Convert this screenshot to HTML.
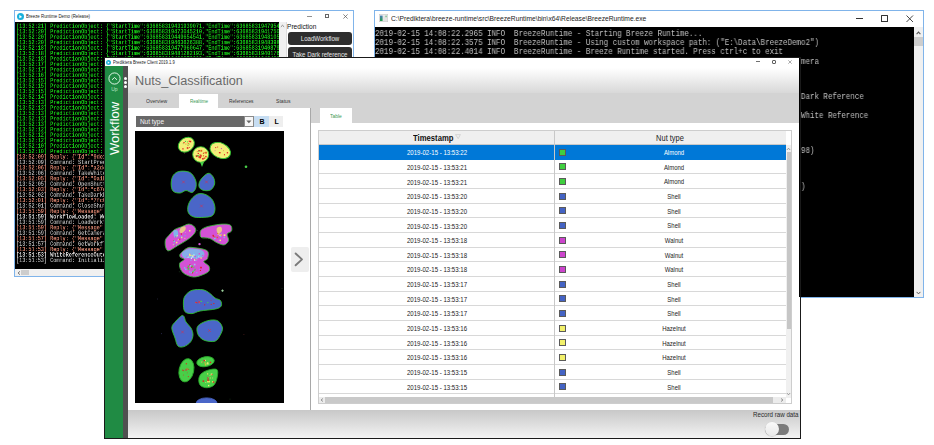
<!DOCTYPE html>
<html><head><meta charset="utf-8">
<style>
*{box-sizing:border-box;margin:0;padding:0}
html,body{width:934px;height:445px;overflow:hidden;background:#fff;font-family:"Liberation Sans",sans-serif}
body{position:relative}
.a{position:absolute}
.nw{white-space:nowrap}
/* ---------- left window ---------- */
#lw{position:absolute;left:14px;top:10px;width:340px;height:267px;border:1px solid #80b4ea;background:#fff}
#lw .title{left:10.8px;top:2.3px;font-size:5px;line-height:6px;color:#222;transform:scaleX(0.87);transform-origin:0 50%}
#lcon{left:0;top:11px;width:264px;height:247.3px;background:#000;overflow:hidden}
#lcon .txt{position:absolute;left:1px;top:2.2px;font-family:"Liberation Mono",monospace;font-size:12px;line-height:11px;white-space:pre;font-weight:bold;transform:scale(0.4306,0.495);transform-origin:0 0;will-change:transform}
.g{color:#16c016}.r{color:#c87a66}.c{color:#a4a4a4}.w{color:#d8d8d8}
#lvs{left:264px;top:11px;width:8px;height:247.3px;background:#f0f0f0}
#lhs{left:0;top:258.3px;width:264px;height:6.7px;background:#f0f0f0}
.btn{background:#2e2e2e;border-radius:3px;color:#f6f6f6;text-align:center;font-size:6.2px}
/* ---------- right window ---------- */
#rw{position:absolute;left:374px;top:10px;width:550px;height:288px;border:1px solid #80b4ea;background:#fff}
#rcon{left:0;top:16px;width:538.8px;height:270px;background:#000;overflow:hidden}
#rcon .txt{position:absolute;left:-0.5px;top:2.6px;font-family:"Liberation Mono",monospace;font-size:8px;line-height:8.845px;white-space:pre;color:#c0c0c0;transform:scale(0.934,1.0175);transform-origin:0 0;will-change:transform}
#rvs{left:538.8px;top:16px;width:9.2px;height:270px;background:#f0f0f0}
/* ---------- front window ---------- */
#fw{position:absolute;left:104px;top:57px;width:697px;height:382px;border:1px solid #1a1a1a;background:#fff;overflow:hidden}
#side{left:0;top:8px;width:18px;height:372px;background:#208b44}
#strip{left:18px;top:8px;width:5px;height:372px;background:#505050}
#hdr{left:23px;top:0;width:672px;height:35px;background:linear-gradient(#fff 0px,#fff 10px,#d8d8d8 35px)}
#tabbar{left:23px;top:35px;width:672px;height:15px;background:#d3d3d3}
.tab{font-size:5.5px;line-height:6px;color:#333;transform-origin:0 50%}
#lpane{left:23px;top:50px;width:182px;height:302.7px;background:#fff}
#rhead{left:206px;top:50px;width:489px;height:14.5px;background:#d3d3d3}
#rpane{left:206px;top:64.5px;width:489px;height:288.2px;background:#fff}
#vdiv{left:205px;top:50px;width:1px;height:302.7px;background:#a8a8a8}
#bbar{left:23px;top:351.7px;width:672px;height:28.3px;background:linear-gradient(#c8c8c8,#f3f3f3)}
/* table */
#tbl{left:213.3px;top:72.3px;width:474px;height:273.7px;border:1px solid #cdcdcd;background:#fff;overflow:hidden}
#thead{left:0;top:0;width:467px;height:13.4px;background:#efefef;border-bottom:1px solid #c8c8c8}
.row{position:absolute;left:0;width:467px;height:14.65px;border-bottom:1px solid #d8d8d8;font-size:7.5px;color:#1a1a1a}
.row.sel{background:#0078d7;color:#fff;border-bottom-color:#0078d7}
.row .ts{position:absolute;left:0;width:236px;text-align:center;top:4.1px;line-height:8px;transform:scaleX(0.81)}
.row .sq{position:absolute;left:239.3px;top:3.6px;width:7px;height:7px;border:0.6px solid #5a5a5a}
.row .nt{position:absolute;left:254.4px;width:200px;text-align:center;top:4px;line-height:8px;font-size:7px;transform:scaleX(0.85)}
#cdiv{left:235.1px;top:0;width:1px;height:266px;background:#c8c8c8}
#tvs{left:466.5px;top:13.4px;width:6.2px;height:253px;background:#f0f0f0}
#ths{left:0;top:265.5px;width:467px;height:6.7px;background:#ececec}
</style></head><body>

<!-- LEFT WINDOW -->
<div id="lw">
  <svg class="a" style="left:2.2px;top:1.5px" width="7" height="7" viewBox="0 0 6 6"><circle cx="3" cy="3" r="3" fill="#1ab0dc"/><path d="M2 1.6 L4.4 3.4 L2 4.4Z" fill="#fff"/></svg>
  <div class="a title nw">Breeze Runtime Demo (Release)</div>
  <div class="a" style="left:292.2px;top:4.7px;width:4.5px;height:0.7px;background:#909090"></div>
  <div class="a" style="left:309.8px;top:2.6px;width:4.5px;height:4.5px;border:0.7px solid #666"></div>
  <svg class="a" style="left:327.5px;top:2.6px" width="5" height="5" viewBox="0 0 5 5"><path d="M0.4 0.4L4.6 4.6M4.6 0.4L0.4 4.6" stroke="#555" stroke-width="0.7"/></svg>
  <div id="lcon" class="a"><div class="txt"><div class="g">[13:52:21] PredictionObject: {&quot;StartTime&quot;:636858319431939071,&quot;EndTime&quot;:636858319479542916,&quot;Id&quot;:&quot;9de3&quot;}</div><div class="g">[13:52:20] PredictionObject: {&quot;StartTime&quot;:636858319473045210,&quot;EndTime&quot;:636858319417505051,&quot;Id&quot;:&quot;9de3&quot;}</div><div class="g">[13:52:20] PredictionObject: {&quot;StartTime&quot;:636858319449654541,&quot;EndTime&quot;:636858319481056775,&quot;Id&quot;:&quot;9de3&quot;}</div><div class="g">[13:52:20] PredictionObject: {&quot;StartTime&quot;:636858319463626388,&quot;EndTime&quot;:636858319483982757,&quot;Id&quot;:&quot;9de3&quot;}</div><div class="g">[13:52:18] PredictionObject: {&quot;StartTime&quot;:636858319477960647,&quot;EndTime&quot;:636858319408795134,&quot;Id&quot;:&quot;9de3&quot;}</div><div class="g">[13:52:18] PredictionObject: {&quot;StartTime&quot;:636858319481282193,&quot;EndTime&quot;:636858319401767377,&quot;Id&quot;:&quot;9de3&quot;}</div><div class="g">[13:52:18] PredictionObject: {&quot;StartTime&quot;:636858319462979298,&quot;EndTime&quot;:636858319434809906,&quot;Id&quot;:&quot;9de3&quot;}</div><div class="g">[13:52:17] PredictionObject: {&quot;StartTime&quot;:636858319473925063,&quot;EndTime&quot;:636858319431451369,&quot;Id&quot;:&quot;9de3&quot;}</div><div class="g">[13:52:17] PredictionObject: {&quot;StartTime&quot;:636858319425735457,&quot;EndTime&quot;:636858319496253980,&quot;Id&quot;:&quot;9de3&quot;}</div><div class="g">[13:52:16] PredictionObject: {&quot;StartTime&quot;:636858319463117699,&quot;EndTime&quot;:636858319472608285,&quot;Id&quot;:&quot;9de3&quot;}</div><div class="g">[13:52:15] PredictionObject: {&quot;StartTime&quot;:636858319473770246,&quot;EndTime&quot;:636858319463935045,&quot;Id&quot;:&quot;9de3&quot;}</div><div class="g">[13:52:15] PredictionObject: {&quot;StartTime&quot;:636858319453302500,&quot;EndTime&quot;:636858319485774273,&quot;Id&quot;:&quot;9de3&quot;}</div><div class="g">[13:52:15] PredictionObject: {&quot;StartTime&quot;:636858319420215394,&quot;EndTime&quot;:636858319431128044,&quot;Id&quot;:&quot;9de3&quot;}</div><div class="g">[13:52:14] PredictionObject: {&quot;StartTime&quot;:636858319485209555,&quot;EndTime&quot;:636858319420350410,&quot;Id&quot;:&quot;9de3&quot;}</div><div class="g">[13:52:13] PredictionObject: {&quot;StartTime&quot;:636858319470220193,&quot;EndTime&quot;:636858319452336420,&quot;Id&quot;:&quot;9de3&quot;}</div><div class="g">[13:52:13] PredictionObject: {&quot;StartTime&quot;:636858319499489140,&quot;EndTime&quot;:636858319402032960,&quot;Id&quot;:&quot;9de3&quot;}</div><div class="g">[13:52:13] PredictionObject: {&quot;StartTime&quot;:636858319490115322,&quot;EndTime&quot;:636858319408594154,&quot;Id&quot;:&quot;9de3&quot;}</div><div class="g">[13:52:13] PredictionObject: {&quot;StartTime&quot;:636858319421394297,&quot;EndTime&quot;:636858319479336043,&quot;Id&quot;:&quot;9de3&quot;}</div><div class="g">[13:52:13] PredictionObject: {&quot;StartTime&quot;:636858319405743046,&quot;EndTime&quot;:636858319440435460,&quot;Id&quot;:&quot;9de3&quot;}</div><div class="g">[13:52:12] PredictionObject: {&quot;StartTime&quot;:636858319404162326,&quot;EndTime&quot;:636858319436162506,&quot;Id&quot;:&quot;9de3&quot;}</div><div class="g">[13:52:12] PredictionObject: {&quot;StartTime&quot;:636858319463451308,&quot;EndTime&quot;:636858319479825928,&quot;Id&quot;:&quot;9de3&quot;}</div><div class="g">[13:52:12] PredictionObject: {&quot;StartTime&quot;:636858319496478913,&quot;EndTime&quot;:636858319452023943,&quot;Id&quot;:&quot;9de3&quot;}</div><div class="g">[13:52:10] PredictionObject: {&quot;StartTime&quot;:636858319495848836,&quot;EndTime&quot;:636858319457302230,&quot;Id&quot;:&quot;9de3&quot;}</div><div class="g">[13:52:10] PredictionObject: {&quot;StartTime&quot;:636858319453011090,&quot;EndTime&quot;:636858319497727413,&quot;Id&quot;:&quot;9de3&quot;}</div><div class="r">[13:52:09] Reply: {&quot;Id&quot;:&quot;9de1c0a2&quot;,&quot;Success&quot;:true}</div><div class="c">[13:52:09] Command: StartPredict</div><div class="r">[13:52:06] Reply: {&quot;Id&quot;:&quot;a2d44f10&quot;,&quot;Success&quot;:true}</div><div class="c">[13:52:06] Command: TakeWhiteRef</div><div class="r">[13:52:05] Reply: {&quot;Id&quot;:&quot;0a1b9e77&quot;,&quot;Success&quot;:true}</div><div class="c">[13:52:05] Command: OpenShutter</div><div class="r">[13:52:03] Reply: {&quot;Id&quot;:&quot;c67d2a90&quot;,&quot;Success&quot;:true}</div><div class="c">[13:52:02] Command: TakeDarkRef</div><div class="r">[13:52:01] Reply: {&quot;Id&quot;:&quot;7fc0e3b1&quot;,&quot;Success&quot;:true}</div><div class="c">[13:52:01] Command: CloseShutter</div><div class="r">[13:51:59] Reply: {&quot;Message&quot;:&quot;OK&quot;}</div><div class="w">[13:51:59] WorkflowLoaded: Workflow</div><div class="c">[13:51:59] Command: LoadWorkflow</div><div class="r">[13:51:59] Reply: {&quot;Message&quot;:&quot;OK&quot;}</div><div class="c">[13:51:59] Command: GetCameras</div><div class="r">[13:51:57] Reply: {&quot;Message&quot;:&quot;OK&quot;}</div><div class="c">[13:51:57] Command: GetWorkflows</div><div class="r">[13:51:53] Reply: {&quot;Message&quot;:&quot;OK&quot;}</div><div class="w">[13:51:53] WhiteReferenceOutdated</div><div class="c">[13:51:53] Command: Initialize</div></div></div>
  <div id="lvs" class="a" style="border-right:0.6px solid #dcdcdc"><svg class="a" style="left:0.6px;top:2.2px" width="5" height="4" viewBox="0 0 5 4"><path d="M0.9 2.8L2.5 1.3L4.1 2.8" stroke="#707070" stroke-width="0.8" fill="none"/></svg></div>
  <div id="lhs" class="a"><svg class="a" style="left:1.5px;top:1.3px" width="4" height="4" viewBox="0 0 4 4"><path d="M3 0.3L1 2L3 3.7" stroke="#606060" stroke-width="0.8" fill="none"/></svg><div class="a" style="left:6.4px;top:0.5px;width:7.5px;height:5.7px;background:#cdcdcd"></div></div>
  <div class="a nw" style="left:272px;top:12px;font-size:6.6px;line-height:8px;color:#111">Prediction</div>
  <div class="a btn nw" style="left:273px;top:20.5px;width:64px;height:13.3px"></div><div class="a nw" style="left:273px;top:20.5px;width:64px;height:13.3px;line-height:13.3px;font-size:7px;color:#e8e8e8;text-align:center;transform:scaleX(0.87)">LoadWorkflow</div>
  <div class="a btn nw" style="left:273px;top:36.2px;width:64px;height:13.3px"></div><div class="a nw" style="left:263px;top:36.6px;width:84px;height:13.3px;line-height:13.3px;font-size:7px;color:#e8e8e8;text-align:center;transform:scaleX(0.87)">Take Dark reference</div>
</div>

<!-- RIGHT WINDOW -->
<div id="rw">
  <svg class="a" style="left:4px;top:3px" width="9" height="8" viewBox="0 0 9 8"><defs><linearGradient id="ig" x1="0" y1="0" x2="0" y2="1"><stop offset="0" stop-color="#4a7ab8"/><stop offset="1" stop-color="#22a04a"/></linearGradient></defs><rect x="0.3" y="0.3" width="8.4" height="7.4" fill="#eeeeee" stroke="#c8c8c8" stroke-width="0.6"/><rect x="1" y="1.6" width="2.6" height="5.4" fill="url(#ig)"/><rect x="4.2" y="1.6" width="3.8" height="5.4" fill="#e4e4e4"/><rect x="6.6" y="1.6" width="0.9" height="1.6" fill="#3ab060"/></svg>
  <div class="a nw" style="left:15.6px;top:3.5px;font-size:7.1px;line-height:9px;color:#222;transform:scaleX(0.944);transform-origin:0 50%">C:\Prediktera\breeze-runtime\src\BreezeRuntime\bin\x64\Release\BreezeRuntime.exe</div>
  <div class="a" style="left:481px;top:7px;width:7px;height:0.9px;background:#333"></div>
  <div class="a" style="left:506.4px;top:4.4px;width:6.2px;height:6.2px;border:0.9px solid #333;border-radius:0.5px"></div>
  <svg class="a" style="left:531px;top:3.8px" width="7.5" height="7.5" viewBox="0 0 7.5 7.5"><path d="M0.5 0.5L7 7M7 0.5L0.5 7" stroke="#333" stroke-width="0.9"/></svg>
  <div id="rcon" class="a"><div class="txt"><div>2019-02-15 14:08:22.2965 INFO  BreezeRuntime - Starting Breeze Runtime...</div><div>2019-02-15 14:08:22.3575 INFO  BreezeRuntime - Using custom workspace path: ("E:\Data\BreezeDemo2")</div><div>2019-02-15 14:08:22.4014 INFO  BreezeRuntime - Breeze Runtime started. Press ctrl+c to exit</div><div>2019-02-15 14:08:23.1122 INFO  BreezeRuntime.Camera - Initializing connection to spectral    camera</div><div>2019-02-15 14:08:24.0031 INFO  BreezeRuntime - Camera ready</div><div>2019-02-15 14:08:31.5531 INFO  BreezeRuntime - Workflow loaded</div><div>2019-02-15 14:08:32.0102 INFO  BreezeRuntime - Shutter closed</div><div>2019-02-15 14:08:33.6210 INFO  BreezeRuntime.Camera - Successfully captured reference frame:   Dark Reference</div><div>2019-02-15 14:08:35.1093 INFO  BreezeRuntime - Shutter opened</div><div>2019-02-15 14:08:36.8837 INFO  BreezeRuntime.Camera - Successfully captured reference frame:   White Reference</div><div>2019-02-15 14:08:38.2214 INFO  BreezeRuntime - Prediction started</div><div>2019-02-15 14:08:38.3312 INFO  BreezeRuntime - Streaming</div><div>2019-02-15 14:08:38.4410 INFO  BreezeRuntime - Objects</div><div>2019-02-15 14:08:39.0012 INFO  BreezeRuntime.Predict - Frame statistics (width: 640, objects:  98)</div><div>&nbsp;</div><div>&nbsp;</div><div>&nbsp;</div><div>2019-02-15 14:08:41.0012 INFO  BreezeRuntime.Predict - Frame statistics (frames: 12, rate:  0.0)</div></div></div>
  <div id="rvs" class="a">
    <svg class="a" style="left:2.2px;top:3.6px" width="5" height="4" viewBox="0 0 5 4"><path d="M0.6 3.1L2.5 1.1L4.4 3.1" stroke="#555" stroke-width="1.05" fill="none"/></svg>
    <div class="a" style="left:0.2px;top:10.2px;width:8.6px;height:8.8px;background:#cdcdcd"></div>
    <svg class="a" style="left:2px;top:263.5px" width="5" height="4" viewBox="0 0 5 4"><path d="M0.6 0.9L2.5 2.9L4.4 0.9" stroke="#555" stroke-width="1" fill="none"/></svg>
  </div>
</div>

<!-- FRONT WINDOW -->
<div id="fw">
  <div id="side" class="a">
    <svg class="a" style="left:3.2px;top:5.6px" width="14" height="14" viewBox="0 0 14 14"><circle cx="6.5" cy="6.5" r="5.6" fill="none" stroke="#f4fff6" stroke-width="0.9"/><path d="M4 7.8L6.5 5.5L9 7.8" fill="none" stroke="#f4fff6" stroke-width="0.9"/></svg>
    <div class="a nw" style="left:6.2px;top:20.8px;font-size:5px;line-height:5px;color:#bfe6c8">Up</div>
    <div class="a nw" style="left:-17px;top:56px;width:53px;height:13px;transform:rotate(-90deg);transform-origin:50% 50%;font-size:13px;line-height:13px;color:#fff;text-align:center">Workflow</div>
  </div>
  <div id="strip" class="a">
    <div class="a" style="left:1px;top:11px;width:3px;height:3px;border-radius:50%;background:#fff"></div>
    <div class="a" style="left:1px;top:14.8px;width:3px;height:3px;border-radius:50%;background:#fff"></div>
    <div class="a" style="left:1px;top:18.8px;width:3px;height:3px;border-radius:50%;background:#fff"></div>
  </div>
  <div id="hdr" class="a"></div>
  <div class="a nw" style="left:30.1px;top:14.7px;font-size:12.68px;line-height:16px;color:#6a6a6a">Nuts_Classification</div>
  <svg class="a" style="left:1.1px;top:1.6px" width="5" height="5" viewBox="0 0 6 6"><circle cx="3" cy="3" r="3" fill="#1ab0dc"/><path d="M2 1.6 L4.4 3.4 L2 4.4Z" fill="#fff"/></svg>
  <div class="a nw" style="left:7.8px;top:2.1px;font-size:4.8px;line-height:6px;color:#222;transform:scaleX(0.857);transform-origin:0 50%">Prediktera Breeze Client 2019.1.9</div>
  <div class="a" style="left:650.6px;top:3.2px;width:4.2px;height:0.6px;background:#707070"></div>
  <div class="a" style="left:666.6px;top:2px;width:4.2px;height:4px;border:0.7px solid #606060;border-radius:1px"></div>
  <svg class="a" style="left:683.4px;top:1.7px" width="4" height="4" viewBox="0 0 4 4"><path d="M0.3 0.3L3.7 3.7M3.7 0.3L0.3 3.7" stroke="#707070" stroke-width="0.6"/></svg>

  <div id="tabbar" class="a"></div>
  <div class="a" style="left:74.2px;top:36.1px;width:38.8px;height:14px;background:#fff"></div>
  <div class="a tab nw" style="left:41px;top:39.8px;transform:scaleX(0.925)">Overview</div>
  <div class="a tab nw" style="left:84.8px;top:39.8px;color:#3c9a55;transform:scaleX(0.83)">Realtime</div>
  <div class="a tab nw" style="left:123.6px;top:39.8px;transform:scaleX(0.87)">References</div>
  <div class="a tab nw" style="left:171px;top:39.8px;transform:scaleX(0.93)">Status</div>

  <div id="lpane" class="a"></div>
  <div id="rhead" class="a"></div>
  <div class="a" style="left:214.7px;top:49.6px;width:32.3px;height:15px;background:#fff"></div>
  <div class="a tab nw" style="left:225.2px;top:54.8px;color:#3c9a55;transform:scaleX(0.9)">Table</div>
  <div id="rpane" class="a"></div>
  <div id="vdiv" class="a"></div>

  <!-- dropdown -->
  <div class="a" style="left:30.8px;top:58px;width:107.9px;height:10.8px;background:#686868"></div>
  <div class="a nw" style="left:34.9px;top:59.7px;font-size:6.5px;line-height:8px;color:#f4f4f4">Nut type</div>
  <div class="a" style="left:138.7px;top:58px;width:9.9px;height:10.8px;background:#f6f6f6;border:0.7px solid #8a8a8a"></div>
  <svg class="a" style="left:141px;top:61.6px" width="6" height="4" viewBox="0 0 6 4"><path d="M0.3 0.4L5.5 0.4L2.9 3.2Z" fill="#666"/></svg>
  <div class="a" style="left:148.6px;top:58px;width:15.4px;height:10.8px;background:#c6ddf2"></div>
  <div class="a nw" style="left:154.6px;top:59.6px;font-size:7px;line-height:8px;font-weight:bold;color:#000">B</div>
  <div class="a" style="left:164px;top:58px;width:14.4px;height:10.8px;background:#eeeeee"></div>
  <div class="a nw" style="left:169.4px;top:59.6px;font-size:7px;line-height:8px;font-weight:bold;color:#000">L</div>

  <!-- image -->
  <div class="a" style="left:30px;top:73px;width:148.5px;height:272px;background:#000;overflow:hidden">
    <svg class="a" style="left:0;top:0" width="148" height="272" viewBox="0 0 148 272">
      <ellipse cx="51.3" cy="13.7" rx="8.6" ry="6.8" transform="rotate(-35 51.3 13.7)" fill="#f3ef78" stroke="#2fc02f" stroke-width="0.9"/>
<rect x="47.8" y="12.3" width="0.8" height="0.8" fill="#48cf48"/>
<rect x="54.2" y="16.2" width="0.8" height="0.8" fill="#e02020"/>
<rect x="48.4" y="11.0" width="1.2" height="1.2" fill="#e02020"/>
<rect x="47.3" y="17.2" width="1.3" height="1.3" fill="#e02020"/>
<rect x="49.9" y="9.9" width="1.1" height="1.1" fill="#48cf48"/>
<rect x="53.7" y="9.7" width="1.2" height="1.2" fill="#e02020"/>
<rect x="52.3" y="13.7" width="0.9" height="0.9" fill="#48cf48"/>
<rect x="52.8" y="14.2" width="0.8" height="0.8" fill="#f08030"/>
<rect x="53.7" y="12.7" width="0.9" height="0.9" fill="#48cf48"/>
<rect x="52.7" y="11.9" width="1.2" height="1.2" fill="#f08030"/>
<rect x="54.7" y="9.8" width="1.5" height="1.5" fill="#e02020"/>
<rect x="51.9" y="10.4" width="1.0" height="1.0" fill="#48cf48"/>
<rect x="50.4" y="12.6" width="1.0" height="1.0" fill="#f08030"/>
<rect x="51.8" y="16.2" width="1.6" height="1.6" fill="#e02020"/>
<ellipse cx="65.7" cy="23.5" rx="8" ry="7.8" transform="rotate(0 65.7 23.5)" fill="#f3ef78" stroke="#2fc02f" stroke-width="0.9"/>
<rect x="60.6" y="24.2" width="1.1" height="1.1" fill="#48cf48"/>
<rect x="63.9" y="23.5" width="0.9" height="0.9" fill="#e06020"/>
<rect x="68.5" y="21.2" width="1.1" height="1.1" fill="#e06020"/>
<rect x="64.3" y="25.5" width="1.8" height="1.8" fill="#e02020"/>
<rect x="64.0" y="24.8" width="0.8" height="0.8" fill="#e06020"/>
<rect x="62.7" y="22.2" width="0.9" height="0.9" fill="#e06020"/>
<rect x="65.1" y="24.1" width="1.6" height="1.6" fill="#e02020"/>
<rect x="70.1" y="20.8" width="1.8" height="1.8" fill="#e06020"/>
<rect x="67.9" y="22.1" width="0.9" height="0.9" fill="#e02020"/>
<rect x="61.8" y="20.3" width="0.8" height="0.8" fill="#e02020"/>
<rect x="63.1" y="19.2" width="1.4" height="1.4" fill="#48cf48"/>
<rect x="63.5" y="19.0" width="1.3" height="1.3" fill="#e02020"/>
<rect x="67.9" y="24.2" width="1.2" height="1.2" fill="#e06020"/>
<rect x="60.9" y="25.1" width="1.0" height="1.0" fill="#e02020"/>
<rect x="61.0" y="24.7" width="0.8" height="0.8" fill="#e02020"/>
<rect x="70.2" y="24.9" width="1.4" height="1.4" fill="#e02020"/>
<rect x="65.4" y="18.9" width="1.8" height="1.8" fill="#e06020"/>
<rect x="65.3" y="23.3" width="0.9" height="0.9" fill="#e02020"/>
<rect x="68.7" y="26.4" width="1.6" height="1.6" fill="#e06020"/>
<rect x="61.5" y="24.0" width="1.6" height="1.6" fill="#e02020"/>
<rect x="63.3" y="25.2" width="1.5" height="1.5" fill="#e02020"/>
<rect x="62.8" y="21.9" width="1.1" height="1.1" fill="#e02020"/>
<rect x="62.4" y="24.0" width="1.4" height="1.4" fill="#48cf48"/>
<rect x="67.1" y="27.0" width="1.6" height="1.6" fill="#e02020"/>
<path d="M65.0 31.0L67.0 36.0L69.0 31.0Z" fill="#48cf48"/>
<ellipse cx="85.3" cy="19.5" rx="10.8" ry="7.4" transform="rotate(25 85.3 19.5)" fill="#f3ef78" stroke="#2fc02f" stroke-width="0.9"/>
<rect x="89.1" y="23.4" width="0.8" height="0.8" fill="#e02020"/>
<rect x="84.4" y="21.1" width="1.2" height="1.2" fill="#e02020"/>
<rect x="85.9" y="17.1" width="1.0" height="1.0" fill="#c040c0"/>
<rect x="82.2" y="15.6" width="0.9" height="0.9" fill="#e02020"/>
<rect x="91.8" y="21.1" width="1.3" height="1.3" fill="#e02020"/>
<rect x="80.2" y="16.1" width="1.0" height="1.0" fill="#e02020"/>
<rect x="79.7" y="19.4" width="0.7" height="0.7" fill="#c040c0"/>
<rect x="83.9" y="21.0" width="1.2" height="1.2" fill="#e02020"/>
<rect x="88.1" y="19.5" width="0.6" height="0.6" fill="#e02020"/>
<rect x="88.9" y="23.2" width="1.0" height="1.0" fill="#e02020"/>
<circle cx="111.0" cy="35.8" r="1.3" fill="#48cf48"/>
<path d="M45.0 40.3C47.8 39.9 52.4 40.1 55.0 41.5C57.6 42.9 59.5 46.4 60.5 49.0C61.5 51.6 61.4 54.9 60.8 57.0C60.2 59.1 58.6 61.1 57.0 61.5C55.4 61.9 53.0 59.4 51.0 59.5C49.0 59.6 47.2 61.9 45.0 62.0C42.8 62.1 39.5 61.7 38.0 60.0C36.5 58.3 36.1 54.7 36.2 52.0C36.3 49.3 37.0 45.9 38.5 44.0C40.0 42.1 42.2 40.7 45.0 40.3Z" fill="#4a66c8" stroke="#2fc02f" stroke-width="0.9"/>
<path d="M73.0 42.3C75.1 41.8 77.1 44.2 78.2 46.0C79.3 47.8 80.0 50.8 79.6 53.0C79.1 55.2 77.4 58.0 75.5 59.0C73.6 60.0 69.9 59.8 68.0 59.2C66.1 58.6 64.4 57.2 64.0 55.5C63.6 53.8 64.0 51.2 65.5 49.0C67.0 46.8 70.9 42.8 73.0 42.3Z" fill="#4a66c8" stroke="#2fc02f" stroke-width="0.9"/>
<path d="M63.0 62.9C65.4 62.2 68.6 62.7 71.0 63.7C73.4 64.7 76.0 66.7 77.5 69.0C79.0 71.3 80.0 74.9 80.0 77.5C80.0 80.1 79.3 83.0 77.5 84.5C75.7 86.0 72.1 86.1 69.0 86.3C65.9 86.6 61.6 86.7 59.0 86.0C56.4 85.3 54.5 83.8 53.5 82.0C52.5 80.2 52.5 77.3 53.0 75.0C53.5 72.7 54.8 70.0 56.5 68.0C58.2 66.0 60.6 63.6 63.0 62.9Z" fill="#4a66c8" stroke="#2fc02f" stroke-width="0.9"/>
<path d="M47.1 49.6L49.9 52.4M49.9 49.6L47.1 52.4" stroke="#d03050" stroke-width="0.6"/>
<path d="M70.1 49.6L72.9 52.4M72.9 49.6L70.1 52.4" stroke="#d03050" stroke-width="0.6"/>
<path d="M65.1 73.6L67.9 76.4M67.9 73.6L65.1 76.4" stroke="#d03050" stroke-width="0.6"/>
<path d="M30.8 108.1C31.4 106.9 32.3 106.0 33.8 104.4C35.3 102.8 37.4 100.0 39.6 98.6C41.8 97.1 44.6 96.6 46.9 95.7C49.2 94.8 51.6 93.2 53.5 93.1C55.4 93.0 57.4 94.0 58.6 95.0C59.8 96.0 60.9 97.7 60.8 99.3C60.7 100.9 59.4 102.7 57.8 104.4C56.2 106.1 53.9 107.8 51.3 109.5C48.8 111.2 45.4 113.0 42.5 114.7C39.6 116.4 35.8 119.5 33.8 119.8C31.9 120.2 31.4 118.2 30.8 116.8C30.2 115.5 30.1 113.1 30.1 111.7C30.1 110.2 30.2 109.3 30.8 108.1Z" fill="#d452d6" stroke="#3ab43a" stroke-width="0.9"/>
<path d="M46.0 96.5C46.9 95.6 49.2 95.2 50.0 95.5C50.8 95.8 51.0 97.4 50.5 98.5C50.0 99.6 48.0 101.6 47.0 102.0C46.0 102.4 44.7 101.9 44.5 101.0C44.3 100.1 45.1 97.4 46.0 96.5Z" fill="#f0ec70" opacity="0.75"/>
<path d="M38.5 100.0C39.0 98.8 41.8 98.7 42.5 99.5C43.2 100.3 43.5 103.8 43.0 105.0C42.5 106.2 40.2 107.3 39.5 106.5C38.8 105.7 38.0 101.2 38.5 100.0Z" fill="#72c6ee" opacity="0.85"/>
<rect x="54.0" y="99.0" width="1.5" height="1.5" fill="#f3ef78"/>
<rect x="38.1" y="109.2" width="1.2" height="1.2" fill="#e02020"/>
<rect x="49.8" y="100.9" width="1.1" height="1.1" fill="#e070e0"/>
<rect x="42.2" y="108.5" width="1.5" height="1.5" fill="#e070e0"/>
<rect x="47.9" y="108.8" width="0.8" height="0.8" fill="#e070e0"/>
<rect x="38.4" y="112.2" width="1.5" height="1.5" fill="#9090e0"/>
<rect x="49.4" y="106.9" width="0.9" height="0.9" fill="#f3ef78"/>
<rect x="46.3" y="108.7" width="0.8" height="0.8" fill="#e070e0"/>
<rect x="49.4" y="103.8" width="1.5" height="1.5" fill="#9090e0"/>
<rect x="37.8" y="113.3" width="0.9" height="0.9" fill="#f3ef78"/>
<rect x="45.8" y="102.4" width="1.2" height="1.2" fill="#e02020"/>
<rect x="46.0" y="105.8" width="1.4" height="1.4" fill="#f3ef78"/>
<rect x="40.9" y="110.8" width="1.5" height="1.5" fill="#f3ef78"/>
<rect x="41.7" y="104.1" width="1.1" height="1.1" fill="#f3ef78"/>
<rect x="38.4" y="109.5" width="1.6" height="1.6" fill="#72c6ee"/>
<rect x="39.8" y="113.7" width="0.9" height="0.9" fill="#e02020"/>
<rect x="43.3" y="108.0" width="0.9" height="0.9" fill="#f3ef78"/>
<rect x="44.2" y="107.7" width="1.1" height="1.1" fill="#e02020"/>
<rect x="40.1" y="105.6" width="0.7" height="0.7" fill="#e02020"/>
<rect x="46.2" y="105.2" width="1.1" height="1.1" fill="#72c6ee"/>
<rect x="44.6" y="104.6" width="0.8" height="0.8" fill="#72c6ee"/>
<rect x="40.6" y="113.6" width="1.5" height="1.5" fill="#9090e0"/>
<path d="M65.9 99.3C66.8 98.2 68.1 97.3 70.3 96.4C72.5 95.5 75.9 94.7 79.0 94.2C82.1 93.6 86.4 93.0 89.2 93.1C92.0 93.1 94.6 93.3 95.8 94.5C97.0 95.7 97.1 98.7 96.5 100.1C95.9 101.5 92.7 101.4 92.2 103.0C91.7 104.6 94.1 107.7 93.6 109.5C93.1 111.3 91.1 113.5 89.2 113.9C87.2 114.3 84.3 112.8 81.9 111.7C79.5 110.6 77.1 108.2 74.6 107.4C72.0 106.6 68.2 107.3 66.6 106.6C65.0 105.9 65.2 104.2 65.1 103.0C65.0 101.8 65.0 100.4 65.9 99.3Z" fill="#d452d6" stroke="#3ab43a" stroke-width="0.9"/>
<path d="M82.0 97.0C82.7 96.2 85.2 95.6 86.0 96.0C86.8 96.4 87.2 98.4 87.0 99.5C86.8 100.6 85.3 102.2 84.5 102.5C83.7 102.8 82.4 101.9 82.0 101.0C81.6 100.1 81.3 97.8 82.0 97.0Z" fill="#f0ec70" opacity="0.75"/>
<rect x="81.6" y="105.7" width="1.5" height="1.5" fill="#e05050"/>
<rect x="85.8" y="103.6" width="1.1" height="1.1" fill="#e02020"/>
<rect x="79.5" y="106.9" width="0.8" height="0.8" fill="#72c6ee"/>
<rect x="88.6" y="103.3" width="1.8" height="1.8" fill="#f3ef78"/>
<rect x="82.6" y="109.3" width="0.8" height="0.8" fill="#72c6ee"/>
<rect x="85.1" y="104.9" width="1.1" height="1.1" fill="#72c6ee"/>
<rect x="82.3" y="101.8" width="1.6" height="1.6" fill="#f3ef78"/>
<rect x="78.9" y="105.3" width="1.5" height="1.5" fill="#e05050"/>
<rect x="84.5" y="108.6" width="1.5" height="1.5" fill="#f3ef78"/>
<rect x="88.6" y="105.9" width="1.2" height="1.2" fill="#72c6ee"/>
<rect x="86.3" y="101.8" width="0.8" height="0.8" fill="#72c6ee"/>
<rect x="85.3" y="103.3" width="1.4" height="1.4" fill="#f3ef78"/>
<rect x="77.6" y="103.8" width="1.1" height="1.1" fill="#e02020"/>
<rect x="83.2" y="102.3" width="1.0" height="1.0" fill="#f3ef78"/>
<rect x="77.7" y="104.4" width="1.3" height="1.3" fill="#e02020"/>
<rect x="82.4" y="102.1" width="0.9" height="0.9" fill="#e02020"/>
<rect x="84.1" y="103.7" width="1.1" height="1.1" fill="#f3ef78"/>
<rect x="79.0" y="106.7" width="1.5" height="1.5" fill="#72c6ee"/>
<path d="M45.4 122.7C46.6 121.1 50.3 117.8 52.7 116.8C55.1 115.8 57.3 116.6 60.0 116.8C62.7 117.1 66.6 117.6 68.8 118.3C71.0 119.0 72.6 119.6 73.2 121.2C73.8 122.8 73.1 126.2 72.4 127.8C71.7 129.4 68.6 129.5 68.8 130.7C69.1 131.9 73.1 133.5 73.9 135.1C74.8 136.7 75.0 138.7 73.9 140.2C72.8 141.7 69.9 142.9 67.3 143.9C64.8 144.9 61.5 146.1 58.6 146.0C55.7 145.9 52.0 144.4 49.8 143.1C47.6 141.8 46.3 139.8 45.4 138.0C44.6 136.2 44.1 133.8 44.7 132.2C45.3 130.6 49.0 129.5 49.1 128.5C49.2 127.5 46.0 127.3 45.4 126.3C44.8 125.3 44.2 124.3 45.4 122.7Z" fill="#d452d6" stroke="#3ab43a" stroke-width="0.9"/>
<path d="M47.0 122.0C47.7 120.5 50.7 118.7 53.0 118.0C55.3 117.3 58.5 117.7 61.0 118.0C63.5 118.3 66.7 118.8 68.0 120.0C69.3 121.2 70.0 123.7 69.0 125.0C68.0 126.3 64.3 127.7 62.0 128.0C59.7 128.3 57.2 127.2 55.0 127.0C52.8 126.8 50.3 127.8 49.0 127.0C47.7 126.2 46.3 123.5 47.0 122.0Z" fill="#72c6ee" opacity="0.8"/>
<rect x="63.3" y="128.8" width="1.7" height="1.7" fill="#d452d6"/>
<rect x="63.4" y="124.9" width="1.7" height="1.7" fill="#e0e0ff"/>
<rect x="61.5" y="127.3" width="1.0" height="1.0" fill="#f3ef78"/>
<rect x="59.5" y="125.0" width="1.8" height="1.8" fill="#72c6ee"/>
<rect x="60.7" y="128.9" width="0.9" height="0.9" fill="#72c6ee"/>
<rect x="53.9" y="122.6" width="1.7" height="1.7" fill="#d452d6"/>
<rect x="64.0" y="125.0" width="0.9" height="0.9" fill="#f3ef78"/>
<rect x="59.5" y="127.5" width="1.1" height="1.1" fill="#d452d6"/>
<rect x="63.6" y="122.1" width="1.4" height="1.4" fill="#d452d6"/>
<rect x="56.7" y="124.8" width="1.7" height="1.7" fill="#e0e0ff"/>
<rect x="61.3" y="126.4" width="1.5" height="1.5" fill="#72c6ee"/>
<rect x="55.6" y="126.5" width="1.5" height="1.5" fill="#e0e0ff"/>
<rect x="51.7" y="124.8" width="1.1" height="1.1" fill="#d452d6"/>
<rect x="62.4" y="126.9" width="1.2" height="1.2" fill="#d452d6"/>
<rect x="59.3" y="124.6" width="1.7" height="1.7" fill="#d452d6"/>
<rect x="58.5" y="122.9" width="1.8" height="1.8" fill="#72c6ee"/>
<rect x="54.4" y="122.1" width="0.9" height="0.9" fill="#72c6ee"/>
<rect x="54.2" y="123.6" width="1.8" height="1.8" fill="#f3ef78"/>
<rect x="59.2" y="128.9" width="1.1" height="1.1" fill="#e0e0ff"/>
<rect x="67.0" y="124.9" width="1.0" height="1.0" fill="#72c6ee"/>
<rect x="57.1" y="127.3" width="1.2" height="1.2" fill="#d452d6"/>
<rect x="55.3" y="128.4" width="1.2" height="1.2" fill="#72c6ee"/>
<rect x="55.8" y="124.0" width="1.6" height="1.6" fill="#72c6ee"/>
<rect x="56.4" y="123.9" width="0.9" height="0.9" fill="#f3ef78"/>
<rect x="66.1" y="122.8" width="1.8" height="1.8" fill="#72c6ee"/>
<rect x="54.0" y="122.7" width="1.2" height="1.2" fill="#f3ef78"/>
<rect x="64.5" y="127.9" width="1.8" height="1.8" fill="#d452d6"/>
<rect x="65.2" y="126.3" width="1.5" height="1.5" fill="#f3ef78"/>
<rect x="63.6" y="124.5" width="1.6" height="1.6" fill="#72c6ee"/>
<rect x="58.4" y="123.4" width="1.1" height="1.1" fill="#e0e0ff"/>
<rect x="63.8" y="126.5" width="1.6" height="1.6" fill="#d452d6"/>
<rect x="55.0" y="125.6" width="1.0" height="1.0" fill="#d452d6"/>
<rect x="59.0" y="128.1" width="1.1" height="1.1" fill="#f3ef78"/>
<rect x="58.0" y="121.4" width="1.1" height="1.1" fill="#72c6ee"/>
<rect x="52.5" y="125.6" width="1.1" height="1.1" fill="#e0e0ff"/>
<rect x="54.2" y="125.7" width="1.7" height="1.7" fill="#72c6ee"/>
<rect x="57.3" y="124.1" width="1.1" height="1.1" fill="#f3ef78"/>
<rect x="54.4" y="127.5" width="1.2" height="1.2" fill="#d452d6"/>
<rect x="59.1" y="126.3" width="0.9" height="0.9" fill="#72c6ee"/>
<rect x="66.9" y="123.8" width="1.3" height="1.3" fill="#d452d6"/>
<rect x="54.5" y="140.1" width="0.9" height="0.9" fill="#72c6ee"/>
<rect x="57.2" y="139.6" width="1.8" height="1.8" fill="#48cf48"/>
<rect x="58.8" y="132.7" width="1.7" height="1.7" fill="#b0b0f0"/>
<rect x="59.5" y="138.8" width="0.9" height="0.9" fill="#48cf48"/>
<rect x="50.0" y="137.7" width="1.5" height="1.5" fill="#72c6ee"/>
<rect x="54.3" y="133.3" width="1.3" height="1.3" fill="#e02020"/>
<rect x="57.5" y="139.6" width="0.9" height="0.9" fill="#72c6ee"/>
<rect x="59.6" y="137.8" width="1.1" height="1.1" fill="#48cf48"/>
<rect x="53.7" y="135.2" width="1.3" height="1.3" fill="#d452d6"/>
<rect x="52.6" y="134.5" width="1.5" height="1.5" fill="#48cf48"/>
<rect x="59.0" y="138.7" width="0.9" height="0.9" fill="#48cf48"/>
<rect x="52.5" y="136.2" width="1.0" height="1.0" fill="#e02020"/>
<rect x="57.1" y="138.8" width="0.8" height="0.8" fill="#d452d6"/>
<rect x="54.0" y="140.5" width="1.0" height="1.0" fill="#72c6ee"/>
<rect x="66.7" y="134.3" width="1.1" height="1.1" fill="#d452d6"/>
<rect x="62.0" y="138.1" width="1.3" height="1.3" fill="#d452d6"/>
<rect x="61.3" y="141.2" width="1.0" height="1.0" fill="#72c6ee"/>
<rect x="56.4" y="141.0" width="1.5" height="1.5" fill="#e02020"/>
<rect x="54.9" y="133.9" width="1.6" height="1.6" fill="#b0b0f0"/>
<rect x="56.1" y="135.7" width="1.2" height="1.2" fill="#e02020"/>
<rect x="48.9" y="136.2" width="1.4" height="1.4" fill="#72c6ee"/>
<rect x="65.2" y="135.8" width="1.6" height="1.6" fill="#e02020"/>
<rect x="58.4" y="135.7" width="1.0" height="1.0" fill="#48cf48"/>
<rect x="55.7" y="141.0" width="1.4" height="1.4" fill="#72c6ee"/>
<rect x="53.0" y="138.3" width="0.8" height="0.8" fill="#48cf48"/>
<rect x="55.1" y="134.7" width="0.8" height="0.8" fill="#b0b0f0"/>
<rect x="64.9" y="138.9" width="1.1" height="1.1" fill="#e02020"/>
<rect x="64.3" y="138.0" width="0.8" height="0.8" fill="#72c6ee"/>
<rect x="52.6" y="136.8" width="1.8" height="1.8" fill="#48cf48"/>
<rect x="56.3" y="134.5" width="1.6" height="1.6" fill="#48cf48"/>
<circle cx="64.5" cy="113.1" r="1.2" fill="#d452d6"/>
<path d="M50.0 165.0C51.4 162.9 54.0 160.3 57.0 159.3C60.0 158.3 65.0 158.3 68.0 158.8C71.0 159.3 73.0 161.1 75.0 162.5C77.0 163.9 78.2 165.8 80.0 167.0C81.8 168.2 84.5 168.2 85.5 169.5C86.5 170.8 87.0 173.6 86.2 175.0C85.4 176.4 84.0 177.2 80.5 178.0C77.0 178.8 68.9 179.2 65.0 180.0C61.1 180.8 59.5 182.5 57.0 182.6C54.5 182.7 51.2 182.3 49.8 180.5C48.4 178.7 48.4 174.6 48.4 172.0C48.4 169.4 48.6 167.1 50.0 165.0Z" fill="#4a66c8" stroke="#2fc02f" stroke-width="0.9"/>
<rect x="61.2" y="171.0" width="1.1" height="1.1" fill="#e02020"/>
<rect x="75.7" y="172.9" width="1.0" height="1.0" fill="#e02020"/>
<rect x="65.9" y="169.9" width="1.1" height="1.1" fill="#48cf48"/>
<rect x="72.3" y="171.1" width="1.1" height="1.1" fill="#48cf48"/>
<rect x="60.3" y="171.0" width="1.2" height="1.2" fill="#e06060"/>
<rect x="69.1" y="173.3" width="1.1" height="1.1" fill="#e02020"/>
<rect x="78.3" y="172.0" width="1.1" height="1.1" fill="#e02020"/>
<rect x="65.1" y="169.7" width="0.8" height="0.8" fill="#48cf48"/>
<rect x="75.7" y="169.2" width="0.7" height="0.7" fill="#e02020"/>
<rect x="63.7" y="169.7" width="0.7" height="0.7" fill="#e06060"/>
<rect x="63.9" y="171.2" width="1.1" height="1.1" fill="#e06060"/>
<rect x="60.5" y="170.8" width="1.1" height="1.1" fill="#e02020"/>
<rect x="86.5" y="158.7" width="2" height="2" fill="#9acf9a" transform="rotate(45 87.5 159.7)"/>
<path d="M46.5 184.8C47.8 184.1 48.2 184.5 49.0 185.5C49.8 186.5 49.8 189.1 51.0 191.0C52.2 192.9 54.8 194.8 56.0 197.0C57.2 199.2 58.1 201.7 58.0 204.0C57.9 206.3 57.0 209.1 55.5 211.0C54.0 212.9 51.1 214.9 49.0 215.6C46.9 216.3 44.5 216.4 43.0 215.0C41.5 213.6 41.0 210.1 40.0 207.0C39.0 203.9 36.6 199.3 36.8 196.5C37.0 193.7 39.4 191.9 41.0 190.0C42.6 188.1 45.2 185.6 46.5 184.8Z" fill="#4a66c8" stroke="#2fc02f" stroke-width="0.9"/>
<path d="M66.0 192.5C68.2 191.2 72.2 189.6 75.0 189.2C77.8 188.8 80.9 188.7 83.0 190.0C85.1 191.3 87.2 194.6 87.5 197.0C87.8 199.4 86.2 202.3 85.0 204.5C83.8 206.7 82.5 209.4 80.0 210.2C77.5 211.0 72.8 210.4 70.0 209.5C67.2 208.6 64.8 206.6 63.5 204.5C62.2 202.4 61.6 199.0 62.0 197.0C62.4 195.0 63.8 193.8 66.0 192.5Z" fill="#4a66c8" stroke="#2fc02f" stroke-width="0.9"/>
<path d="M46.1 199.6L48.9 202.4M48.9 199.6L46.1 202.4" stroke="#d03050" stroke-width="0.6"/>
<path d="M73.1 198.1L75.9 200.9M75.9 198.1L73.1 200.9" stroke="#d03050" stroke-width="0.6"/>
<path d="M62.6 169.6L65.4 172.4M65.4 169.6L62.6 172.4" stroke="#d03050" stroke-width="0.6"/>
<ellipse cx="51.4" cy="239.3" rx="7.3" ry="11.8" transform="rotate(12 51.4 239.3)" fill="#48cf48" stroke="#2aa82a" stroke-width="0.9"/>
<rect x="50.8" y="232.2" width="1.1" height="1.1" fill="#e02020"/>
<rect x="47.2" y="238.6" width="1.0" height="1.0" fill="#e02020"/>
<rect x="48.0" y="243.7" width="0.7" height="0.7" fill="#e02020"/>
<rect x="51.9" y="241.6" width="0.6" height="0.6" fill="#e02020"/>
<rect x="51.0" y="236.9" width="0.7" height="0.7" fill="#e06030"/>
<rect x="51.6" y="237.6" width="1.1" height="1.1" fill="#e06030"/>
<rect x="47.9" y="239.2" width="0.9" height="0.9" fill="#e02020"/>
<rect x="53.3" y="238.2" width="0.8" height="0.8" fill="#e02020"/>
<rect x="52.6" y="236.9" width="0.6" height="0.6" fill="#e06030"/>
<rect x="52.9" y="245.2" width="0.9" height="0.9" fill="#e02020"/>
<ellipse cx="70.5" cy="230.7" rx="8.8" ry="4.9" transform="rotate(-10 70.5 230.7)" fill="#48cf48" stroke="#2aa82a" stroke-width="0.9"/>
<rect x="69.4" y="228.8" width="1.4" height="1.4" fill="#f3ef78"/>
<rect x="69.8" y="233.2" width="1.3" height="1.3" fill="#f0b030"/>
<rect x="69.4" y="231.3" width="1.3" height="1.3" fill="#f0b030"/>
<rect x="66.5" y="230.5" width="1.1" height="1.1" fill="#f3ef78"/>
<rect x="70.7" y="232.5" width="0.9" height="0.9" fill="#f3ef78"/>
<rect x="71.9" y="231.3" width="1.5" height="1.5" fill="#f3ef78"/>
<rect x="72.3" y="232.4" width="1.2" height="1.2" fill="#f3ef78"/>
<rect x="74.8" y="230.7" width="1.4" height="1.4" fill="#e02020"/>
<rect x="67.1" y="230.7" width="0.8" height="0.8" fill="#e02020"/>
<rect x="68.5" y="228.9" width="1.4" height="1.4" fill="#e02020"/>
<path d="M66.0 243.0C67.5 241.4 70.4 239.9 73.0 239.2C75.6 238.4 80.3 237.4 81.8 238.5C83.3 239.6 82.7 243.4 82.2 246.0C81.7 248.6 80.7 252.2 79.0 254.0C77.3 255.8 74.2 256.6 72.0 256.7C69.8 256.8 66.9 255.9 65.5 254.5C64.1 253.1 63.7 250.4 63.8 248.5C63.9 246.6 64.5 244.6 66.0 243.0Z" fill="#48cf48" stroke="#2aa82a" stroke-width="0.9"/>
<rect x="77.8" y="250.4" width="1.5" height="1.5" fill="#e02020"/>
<rect x="67.6" y="249.4" width="1.5" height="1.5" fill="#e02020"/>
<rect x="76.9" y="250.1" width="1.3" height="1.3" fill="#e8e060"/>
<rect x="72.0" y="250.2" width="1.2" height="1.2" fill="#e8e060"/>
<rect x="72.3" y="249.7" width="1.5" height="1.5" fill="#e8e060"/>
<rect x="77.3" y="246.6" width="0.8" height="0.8" fill="#f3ef78"/>
<rect x="72.0" y="242.3" width="1.2" height="1.2" fill="#e8e060"/>
<rect x="70.4" y="251.1" width="0.8" height="0.8" fill="#f3ef78"/>
<rect x="73.1" y="246.3" width="0.7" height="0.7" fill="#f3ef78"/>
<rect x="75.7" y="242.5" width="1.7" height="1.7" fill="#f3ef78"/>
<rect x="76.6" y="243.2" width="1.0" height="1.0" fill="#e02020"/>
<rect x="73.0" y="253.9" width="1.3" height="1.3" fill="#f3ef78"/>
<rect x="74.6" y="244.3" width="0.8" height="0.8" fill="#e8e060"/>
<rect x="73.4" y="249.9" width="1.6" height="1.6" fill="#e8e060"/>
<rect x="72.3" y="248.3" width="1.6" height="1.6" fill="#e02020"/>
<rect x="74.8" y="246.5" width="1.0" height="1.0" fill="#e8e060"/>
<path d="M49.8 237.8L52.2 240.2M52.2 237.8L49.8 240.2" stroke="#c04040" stroke-width="0.6"/>
<path d="M71.8 245.8L74.2 248.2M74.2 245.8L71.8 248.2" stroke="#c04040" stroke-width="0.6"/>
<ellipse cx="71.6" cy="272.5" rx="10.5" ry="5.6" transform="rotate(0 71.6 272.5)" fill="#4a66c8" stroke="#4a66c8" stroke-width="0.9"/>
<rect x="146.6" y="157.0" width="0.8" height="0.8" fill="#204020"/>
<rect x="49.0" y="22.1" width="0.8" height="0.8" fill="#5a2020"/>
<rect x="26.2" y="202.3" width="0.8" height="0.8" fill="#3a3a6a"/>
<rect x="43.9" y="140.4" width="0.8" height="0.8" fill="#204020"/>
<rect x="94.6" y="267.7" width="0.8" height="0.8" fill="#204020"/>
<rect x="108.5" y="203.2" width="0.8" height="0.8" fill="#5a2020"/>
<rect x="22.1" y="167.6" width="0.8" height="0.8" fill="#303050"/>
<rect x="61.8" y="99.0" width="0.8" height="0.8" fill="#3a3a6a"/>
    </svg>
  </div>

  <!-- arrow button -->
  <div class="a" style="left:186.2px;top:189px;width:18.1px;height:24.6px;background:#eeeeee;border-radius:2px"></div>
  <svg class="a" style="left:186.2px;top:189px" width="18" height="25" viewBox="0 0 18 25"><path d="M4.6 6.5L11 12.4L4.6 18.3" fill="none" stroke="#7a7a7a" stroke-width="1.9" stroke-linecap="round" stroke-linejoin="round"/></svg>

  <!-- table -->
  <div id="tbl" class="a">
    <div id="thead" class="a">
      <div class="a nw" style="left:93.7px;top:1.8px;font-size:8.6px;line-height:10px;font-weight:bold;color:#111;transform:scaleX(0.895);transform-origin:0 50%">Timestamp</div>
      <svg class="a" style="left:135.5px;top:2.4px" width="6" height="5" viewBox="0 0 6 5"><path d="M0.5 0.6L5.4 0.6L3.2 4.6Z" fill="none" stroke="#c4c4c4" stroke-width="0.6" stroke-linejoin="round"/></svg>
      <div class="a nw" style="left:250.5px;width:200px;text-align:center;top:2.6px;font-size:8.3px;line-height:9px;color:#222;transform:scaleX(0.9)">Nut type</div>
    </div>
    <div class="row sel" style="top:13.90px"><span class="ts">2019-02-15 - 13:53:22</span><span class="sq" style="background:#3fcf3f"></span><span class="nt">Almond</span></div>
<div class="row" style="top:28.55px"><span class="ts">2019-02-15 - 13:53:21</span><span class="sq" style="background:#3fcf3f"></span><span class="nt">Almond</span></div>
<div class="row" style="top:43.20px"><span class="ts">2019-02-15 - 13:53:21</span><span class="sq" style="background:#3fcf3f"></span><span class="nt">Almond</span></div>
<div class="row" style="top:57.85px"><span class="ts">2019-02-15 - 13:53:20</span><span class="sq" style="background:#4463c4"></span><span class="nt">Shell</span></div>
<div class="row" style="top:72.50px"><span class="ts">2019-02-15 - 13:53:20</span><span class="sq" style="background:#4463c4"></span><span class="nt">Shell</span></div>
<div class="row" style="top:87.15px"><span class="ts">2019-02-15 - 13:53:20</span><span class="sq" style="background:#4463c4"></span><span class="nt">Shell</span></div>
<div class="row" style="top:101.80px"><span class="ts">2019-02-15 - 13:53:18</span><span class="sq" style="background:#cc44cc"></span><span class="nt">Walnut</span></div>
<div class="row" style="top:116.45px"><span class="ts">2019-02-15 - 13:53:18</span><span class="sq" style="background:#cc44cc"></span><span class="nt">Walnut</span></div>
<div class="row" style="top:131.10px"><span class="ts">2019-02-15 - 13:53:18</span><span class="sq" style="background:#cc44cc"></span><span class="nt">Walnut</span></div>
<div class="row" style="top:145.75px"><span class="ts">2019-02-15 - 13:53:17</span><span class="sq" style="background:#4463c4"></span><span class="nt">Shell</span></div>
<div class="row" style="top:160.40px"><span class="ts">2019-02-15 - 13:53:17</span><span class="sq" style="background:#4463c4"></span><span class="nt">Shell</span></div>
<div class="row" style="top:175.05px"><span class="ts">2019-02-15 - 13:53:17</span><span class="sq" style="background:#4463c4"></span><span class="nt">Shell</span></div>
<div class="row" style="top:189.70px"><span class="ts">2019-02-15 - 13:53:16</span><span class="sq" style="background:#f2f06a"></span><span class="nt">Hazelnut</span></div>
<div class="row" style="top:204.35px"><span class="ts">2019-02-15 - 13:53:16</span><span class="sq" style="background:#f2f06a"></span><span class="nt">Hazelnut</span></div>
<div class="row" style="top:219.00px"><span class="ts">2019-02-15 - 13:53:16</span><span class="sq" style="background:#f2f06a"></span><span class="nt">Hazelnut</span></div>
<div class="row" style="top:233.65px"><span class="ts">2019-02-15 - 13:53:15</span><span class="sq" style="background:#4463c4"></span><span class="nt">Shell</span></div>
<div class="row" style="top:248.30px"><span class="ts">2019-02-15 - 13:53:15</span><span class="sq" style="background:#4463c4"></span><span class="nt">Shell</span></div>
<div class="row" style="top:262.95px"><span class="ts">2019-02-15 - 13:53:14</span><span class="sq" style="background:#4463c4"></span><span class="nt">Shell</span></div>
    <div id="cdiv" class="a"></div>
    <div id="tvs" class="a">
      <svg class="a" style="left:0.6px;top:2.5px" width="5" height="4" viewBox="0 0 5 4"><path d="M0.8 3L2.5 1.2L4.2 3" stroke="#777" stroke-width="0.7" fill="none"/></svg><div class="a" style="left:0.8px;top:7.3px;width:4.6px;height:177px;background:#c6c6c6"></div><svg class="a" style="left:0.6px;top:247px" width="5" height="4" viewBox="0 0 5 4"><path d="M0.8 1L2.5 2.8L4.2 1" stroke="#777" stroke-width="0.7" fill="none"/></svg>
    </div>
    <div id="ths" class="a"><svg class="a" style="left:1.2px;top:1.2px" width="4" height="4" viewBox="0 0 4 4"><path d="M2.8 0.6L1.2 2L2.8 3.4" stroke="#666" stroke-width="0.8" fill="none"/></svg><div class="a" style="left:5.3px;top:0.6px;width:448px;height:5.5px;background:#c9c9c9"></div><svg class="a" style="left:461px;top:1.2px" width="4" height="4" viewBox="0 0 4 4"><path d="M1.2 0.6L2.8 2L1.2 3.4" stroke="#666" stroke-width="0.8" fill="none"/></svg></div>
  </div>

  <div id="bbar" class="a"></div>
  <div class="a" style="left:694px;top:0;width:1px;height:239px;background:#000"></div>
  <div class="a nw" style="left:647.8px;top:352.8px;font-size:7px;line-height:8px;color:#2a2a2a;transform:scaleX(0.885);transform-origin:0 50%">Record raw data</div>
  <div class="a" style="left:660px;top:365.5px;width:23.8px;height:11.4px;border-radius:5.7px;background:#7b7b7b"></div>
  <div class="a" style="left:659.5px;top:364.3px;width:14px;height:14px;border-radius:50%;background:linear-gradient(#fafafa,#e8e8e8);box-shadow:0 0.5px 1px rgba(0,0,0,0.25)"></div>
</div>

</body></html>
